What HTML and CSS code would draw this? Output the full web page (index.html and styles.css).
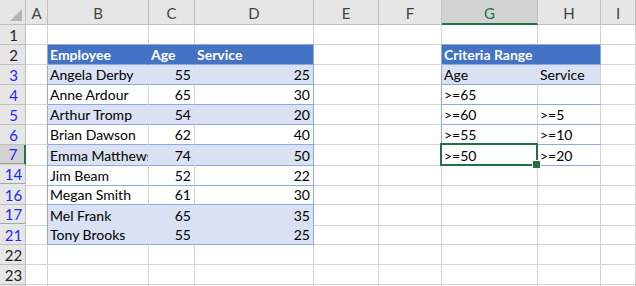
FILE: index.html
```html
<!DOCTYPE html>
<html lang="en">
<head>
  <meta charset="UTF-8" />
  <title>Advanced Filter</title>
  <link rel="stylesheet" href="styles.css">
</head>
<body>

  <div class="sheet">

    <div class="row head">
      <div class="corner"><div class="tri"></div></div>
      <div class="ch">A</div>
      <div class="ch">B</div>
      <div class="ch">C</div>
      <div class="ch">D</div>
      <div class="ch">E</div>
      <div class="ch">F</div>
      <div class="ch sel">G</div>
      <div class="ch">H</div>
      <div class="ch">I</div>
    </div>

    <div class="row">
      <div class="rh">1</div>
      <div class="c"></div>
      <div class="c top"></div>
      <div class="c top"></div>
      <div class="c top"></div>
      <div class="c"></div>
      <div class="c"></div>
      <div class="c top"></div>
      <div class="c top"></div>
      <div class="c"></div>
    </div>

    <div class="row">
      <div class="rh">2</div>
      <div class="c edge"></div>
      <div class="c th">Employee</div>
      <div class="c th">Age</div>
      <div class="c th edge">Service</div>
      <div class="c"></div>
      <div class="c edge"></div>
      <div class="c th">Criteria Range</div>
      <div class="c th edge"></div>
      <div class="c"></div>
    </div>

    <div class="row">
      <div class="rh flt">3</div>
      <div class="c edge"></div>
      <div class="c td band">Angela Derby</div>
      <div class="c td band num">55</div>
      <div class="c td band num edge">25</div>
      <div class="c"></div>
      <div class="c edge"></div>
      <div class="c td band">Age</div>
      <div class="c td band gl">Service</div>
      <div class="c"></div>
    </div>

    <div class="row">
      <div class="rh flt">4</div>
      <div class="c edge"></div>
      <div class="c td">Anne Ardour</div>
      <div class="c td num">65</div>
      <div class="c td num edge">30</div>
      <div class="c"></div>
      <div class="c edge"></div>
      <div class="c td">&gt;=65</div>
      <div class="c td"></div>
      <div class="c"></div>
    </div>

    <div class="row">
      <div class="rh flt">5</div>
      <div class="c edge"></div>
      <div class="c td band">Arthur Tromp</div>
      <div class="c td band num">54</div>
      <div class="c td band num edge">20</div>
      <div class="c"></div>
      <div class="c edge"></div>
      <div class="c td">&gt;=60</div>
      <div class="c td">&gt;=5</div>
      <div class="c"></div>
    </div>

    <div class="row">
      <div class="rh flt">6</div>
      <div class="c edge"></div>
      <div class="c td">Brian Dawson</div>
      <div class="c td num">62</div>
      <div class="c td num edge">40</div>
      <div class="c"></div>
      <div class="c edge"></div>
      <div class="c td">&gt;=55</div>
      <div class="c td">&gt;=10</div>
      <div class="c"></div>
    </div>

    <div class="row">
      <div class="rh flt cur gap">7</div>
      <div class="c edge"></div>
      <div class="c td band">Emma Matthews</div>
      <div class="c td band num">74</div>
      <div class="c td band num edge">50</div>
      <div class="c"></div>
      <div class="c edge"></div>
      <div class="c td active">&gt;=50</div>
      <div class="c td">&gt;=20</div>
      <div class="c"></div>
    </div>

    <div class="row">
      <div class="rh flt gap">14</div>
      <div class="c edge"></div>
      <div class="c td">Jim Beam</div>
      <div class="c td num">52</div>
      <div class="c td num edge">22</div>
      <div class="c"></div>
      <div class="c"></div>
      <div class="c"></div>
      <div class="c"></div>
      <div class="c"></div>
    </div>

    <div class="row">
      <div class="rh flt">16</div>
      <div class="c edge"></div>
      <div class="c td">Megan Smith</div>
      <div class="c td num">61</div>
      <div class="c td num edge">30</div>
      <div class="c"></div>
      <div class="c"></div>
      <div class="c"></div>
      <div class="c"></div>
      <div class="c"></div>
    </div>

    <div class="row">
      <div class="rh flt gap">17</div>
      <div class="c edge"></div>
      <div class="c td band">Mel Frank</div>
      <div class="c td band num">65</div>
      <div class="c td band num edge">35</div>
      <div class="c"></div>
      <div class="c"></div>
      <div class="c"></div>
      <div class="c"></div>
      <div class="c"></div>
    </div>

    <div class="row">
      <div class="rh flt">21</div>
      <div class="c edge"></div>
      <div class="c td band">Tony Brooks</div>
      <div class="c td band num">55</div>
      <div class="c td band num edge">25</div>
      <div class="c"></div>
      <div class="c"></div>
      <div class="c"></div>
      <div class="c"></div>
      <div class="c"></div>
    </div>

    <div class="row">
      <div class="rh">22</div>
      <div class="c"></div>
      <div class="c"></div>
      <div class="c"></div>
      <div class="c"></div>
      <div class="c"></div>
      <div class="c"></div>
      <div class="c"></div>
      <div class="c"></div>
      <div class="c"></div>
    </div>

    <div class="row">
      <div class="rh">23</div>
      <div class="c"></div>
      <div class="c"></div>
      <div class="c"></div>
      <div class="c"></div>
      <div class="c"></div>
      <div class="c"></div>
      <div class="c"></div>
      <div class="c"></div>
      <div class="c"></div>
    </div>

    <!-- row 24 only peeks in at the bottom edge -->
    <div class="row">
      <div class="rh"></div>
      <div class="c"></div>
      <div class="c"></div>
      <div class="c"></div>
      <div class="c"></div>
      <div class="c"></div>
      <div class="c"></div>
      <div class="c"></div>
      <div class="c"></div>
      <div class="c"></div>
    </div>

  </div>

</body>
</html>
```

FILE: styles.css
```css
:root {
  --cols: 26px 22px 101px 46px 119px 65px 63px 96px 63px 1fr;
  --grid: #d4d4d4;
  --head-bg: #e6e6e6;
  --head-line: #bfbfbf;
  --blue: #4472c4;
  --band: #d9e1f2;
  --tline: #8ea9db;
  --green: #217346;
}

* {
  margin: 0;
  padding: 0;
  box-sizing: border-box;
}

body {
  background: #fff;
  font-family: 'Lato', 'Liberation Sans', sans-serif;
  font-size: 14px;
  color: #000;
}

.sheet {
  width: 636px;
  height: 286px;
  overflow: hidden;
  display: flex;
  flex-direction: column;
}

.row {
  display: grid;
  grid-template-columns: var(--cols);
  height: 20px;
  flex-shrink: 0;
}

.row.head {
  height: 25px;
}

/* column headers */
.corner {
  background: var(--head-bg);
  border-right: 1px solid var(--head-line);
  border-bottom: 1px solid var(--head-line);
  display: flex;
  justify-content: flex-end;
  align-items: flex-end;
  padding: 0 3px 3px 0;
}

.tri {
  width: 12px;
  height: 12px;
  background: #b4b4b4;
  clip-path: polygon(100% 0, 100% 100%, 0 100%);
}

.ch {
  background: var(--head-bg);
  border-right: 1px solid var(--head-line);
  border-bottom: 1px solid var(--head-line);
  color: #444;
  font-size: 15px;
  display: flex;
  justify-content: center;
  align-items: center;
  padding-top: 1px;
}

.ch.sel {
  background: #d2d2d2;
  color: var(--green);
  border-bottom: 2px solid var(--green);
  padding-top: 2px;
}

/* row headers */
.rh {
  background: var(--head-bg);
  border-right: 1px solid var(--head-line);
  border-bottom: 1px solid var(--head-line);
  color: #222;
  font-size: 15px;
  display: flex;
  justify-content: center;
  align-items: center;
  padding-left: 2px;
}

.rh.flt {
  color: #2424ff;
}

.rh.cur {
  background: #d2d2d2;
  border-right: 2px solid var(--green);
}

.rh.gap {
  border-bottom: 3px double #a6a6a6;
}

/* cells */
.c {
  border-right: 1px solid var(--grid);
  border-bottom: 1px solid var(--grid);
  display: flex;
  align-items: flex-end;
  padding: 0 3px 1px 2px;
  line-height: 17px;
  white-space: nowrap;
  overflow: hidden;
}

.c.num {
  justify-content: flex-end;
}

.c.top {
  border-bottom-color: var(--tline);
}

.c.td {
  border-bottom-color: var(--tline);
}

.c.band {
  background: var(--band);
  border-right-color: var(--band);
}

.c.band.gl {
  border-right-color: var(--grid);
}

.c.th {
  background: var(--blue);
  color: #fff;
  font-weight: bold;
  border-right-color: var(--blue);
  border-bottom-color: var(--tline);
}

.c.edge {
  border-right-color: var(--tline);
}

/* selected cell */
.c.active {
  position: relative;
  overflow: visible;
  z-index: 2;
}

.c.active::after {
  content: "";
  position: absolute;
  top: -2px;
  left: -2px;
  right: -1px;
  bottom: -1px;
  border: 2px solid var(--green);
}

.c.active::before {
  content: "";
  position: absolute;
  right: -4px;
  bottom: -4px;
  width: 7px;
  height: 7px;
  background: var(--green);
  border: 1px solid #fff;
  z-index: 1;
}
```
